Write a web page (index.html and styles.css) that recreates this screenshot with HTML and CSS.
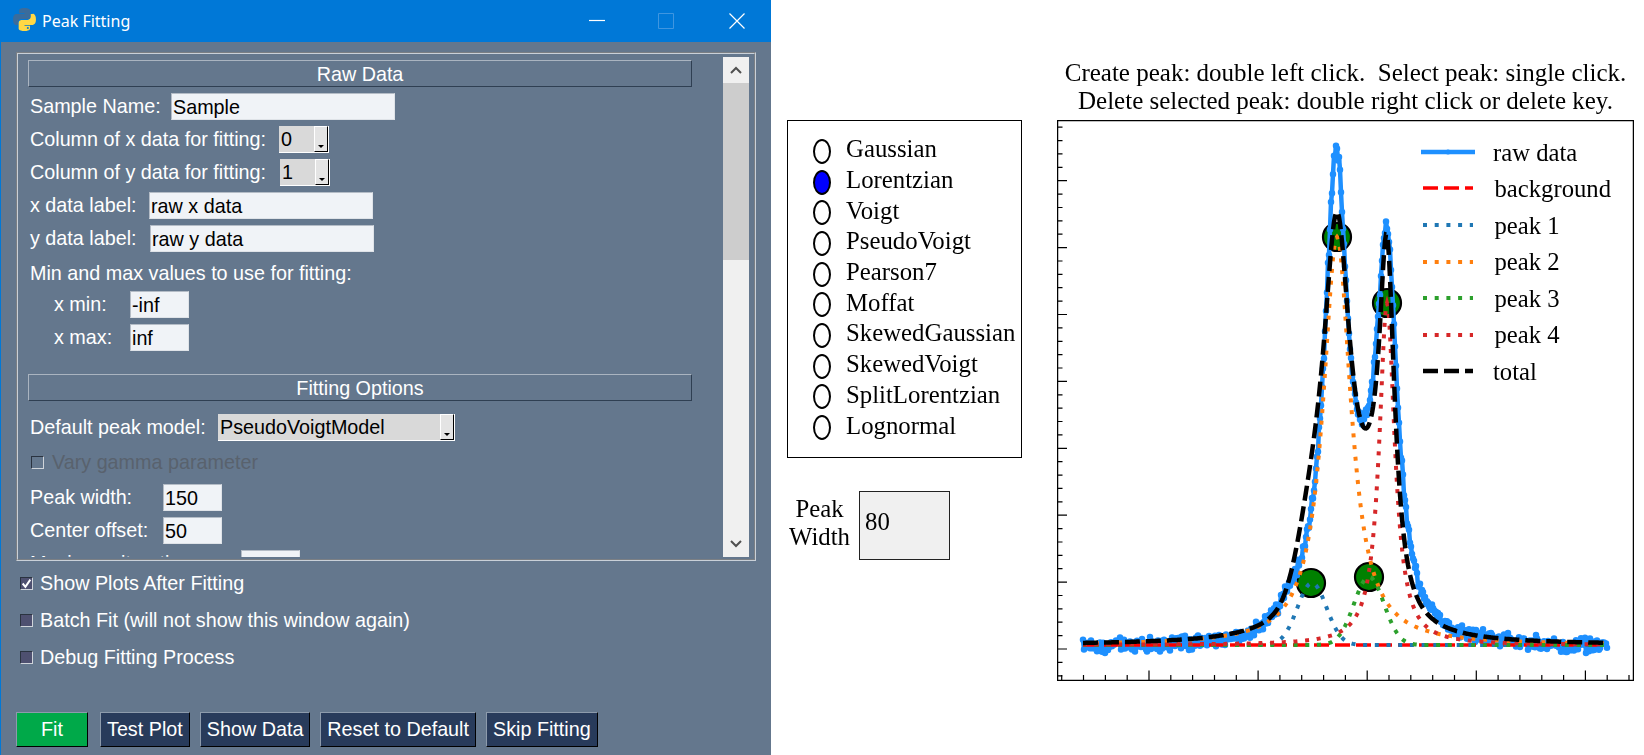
FILE: index.html
```html
<!DOCTYPE html>
<html lang="en">
<head>
<meta charset="utf-8">
<title>Peak Fitting</title>
<link rel="stylesheet" href="styles.css">
</head>
<body>
<section class="window">
  <header class="titlebar">
    <svg class="pyicon" viewBox="0 0 24 24" aria-hidden="true">
      <path class="py-blue" d="M11.9 1C6.4 1 6.7 3.4 6.7 3.4V6H12v.8H4.6S1 6.4 1 12s3.2 5.4 3.2 5.4H6v-2.6s-.1-3.2 3.2-3.2h5.4s3 .1 3-3V3.7S18.1 1 11.9 1z"/>
      <path class="py-yellow" d="M12.1 23c5.500 0 5.200-2.400 5.200-2.400V18H12v-.8h7.400s3.600.4 3.600-5.200-3.200-5.400-3.200-5.400H18v2.600s.1 3.200-3.200 3.200H9.400s-3-.1-3 3v4.900S5.900 23 12.100 23z"/>
      <circle class="py-eye" cx="15.200" cy="20.200" r="1"/>
    </svg>
    <span class="title">Peak Fitting</span>
    <span class="controls">
      <svg class="ctl" viewBox="0 0 16 16" aria-hidden="true"><path class="ctl-on" d="M0 7.500h16"/></svg>
      <svg class="ctl" viewBox="0 0 16 16" aria-hidden="true"><path class="ctl-off" d="M.5.5h15v15H.5z"/></svg>
      <svg class="ctl ctl-close" viewBox="0 0 16 16" aria-hidden="true"><path class="ctl-on" d="M.5.5l15 15M15.500.5l-15 15"/></svg>
    </span>
  </header>

  <div class="winbody">
    <div class="frame">
      <div class="scroll-area">
        <div class="section">Raw Data</div>
        <div class="row"><span class="lbl lw-141">Sample Name:</span><span class="field fw-224">Sample</span></div>
        <div class="row"><span class="lbl lw-249">Column of x data for fitting:</span><span class="combo cw-50">0<i class="drop"></i></span></div>
        <div class="row"><span class="lbl lw-250">Column of y data for fitting:</span><span class="combo cw-50">1<i class="drop"></i></span></div>
        <div class="row"><span class="lbl lw-119">x data label:</span><span class="field fw-224">raw x data</span></div>
        <div class="row"><span class="lbl lw-120">y data label:</span><span class="field fw-224">raw y data</span></div>
        <div class="row mt-8"><span class="lbl">Min and max values to use for fitting:</span></div>
        <div class="row mt-4"><span class="lbl lw-100 indent">x min:</span><span class="field fw-59">-inf</span></div>
        <div class="row"><span class="lbl lw-100 indent">x max:</span><span class="field fw-59">inf</span></div>
        <div class="section mt-23">Fitting Options</div>
        <div class="row mt-13"><span class="lbl lw-188">Default peak model:</span><span class="combo cw-237">PseudoVoigtModel<i class="drop"></i></span></div>
        <div class="row mt-8"><i class="check check-off"></i><span class="lbl-disabled">Vary gamma parameter</span></div>
        <div class="row mt-8"><span class="lbl lw-133">Peak width:</span><span class="field fw-59">150</span></div>
        <div class="row"><span class="lbl lw-133">Center offset:</span><span class="field fw-59">50</span></div>
        <div class="row"><span class="lbl lw-211">Maximum iterations:</span><span class="field fw-59">1.0</span></div>
      </div>
      <div class="scrollbar">
        <div class="sb-btn"><svg viewBox="0 0 12 8" aria-hidden="true"><path d="M1 7l5-5 5 5"/></svg></div>
        <div class="sb-thumb"></div>
        <div class="sb-track"></div>
        <div class="sb-btn"><svg viewBox="0 0 12 8" aria-hidden="true"><path d="M1 1l5 5 5-5"/></svg></div>
      </div>
    </div>

    <div class="options">
      <div class="opt"><i class="check check-on"><svg viewBox="0 0 10 10" aria-hidden="true"><path d="M1.500 5l2.500 3 4.500-6.500"/></svg></i>Show Plots After Fitting</div>
      <div class="opt"><i class="check"></i>Batch Fit (will not show this window again)</div>
      <div class="opt"><i class="check"></i>Debug Fitting Process</div>
    </div>

    <div class="buttons">
      <button class="btn btn-fit">Fit</button>
      <button class="btn">Test Plot</button>
      <button class="btn">Show Data</button>
      <button class="btn">Reset to Default</button>
      <button class="btn">Skip Fitting</button>
    </div>
  </div>
</section>

<main class="canvas">
  <div class="side">
    <div class="radios">
      <div class="radio"><i class="dot"></i>Gaussian</div>
      <div class="radio"><i class="dot dot-on"></i>Lorentzian</div>
      <div class="radio"><i class="dot"></i>Voigt</div>
      <div class="radio"><i class="dot"></i>PseudoVoigt</div>
      <div class="radio"><i class="dot"></i>Pearson7</div>
      <div class="radio"><i class="dot"></i>Moffat</div>
      <div class="radio"><i class="dot"></i>SkewedGaussian</div>
      <div class="radio"><i class="dot"></i>SkewedVoigt</div>
      <div class="radio"><i class="dot"></i>SplitLorentzian</div>
      <div class="radio"><i class="dot"></i>Lognormal</div>
    </div>
    <div class="width-row">
      <div class="width-label">Peak<br>Width</div>
      <div class="width-box">80</div>
    </div>
  </div>
  <div class="plot">
    <div class="plot-title">Create peak: double left click.  Select peak: single click.<br>Delete selected peak: double right click or delete key.</div>
    <svg id="chart" class="chart" viewBox="1057 120 577 561" aria-label="Peak fitting plot">
      <g id="ticks" class="ticks"></g>
      <g id="markers" class="markers"></g>
      <g id="curves" class="curves"></g>
      <rect class="axes" x="1057.500" y="120.500" width="576" height="560"/>
      <g class="legend">
        <path class="l-raw" d="M1421 152h54"/><circle class="l-rawdot" cx="1448" cy="152" r="2.500"/>
        <path class="l-bg" d="M1423 188h50"/>
        <path class="l-dot c1" d="M1423 225h50"/>
        <path class="l-dot c2" d="M1423 262h50"/>
        <path class="l-dot c3" d="M1423 298h50"/>
        <path class="l-dot c4" d="M1423 335h50"/>
        <path class="l-total" d="M1423 371h50"/>
        <text x="1493" y="161">raw data</text>
        <text x="1494.500" y="197">background</text>
        <text x="1494.500" y="234">peak 1</text>
        <text x="1494.500" y="270">peak 2</text>
        <text x="1494.500" y="307">peak 3</text>
        <text x="1494.500" y="343">peak 4</text>
        <text x="1493" y="380">total</text>
      </g>
    </svg>
  </div>
</main>
<script src="chart.js"></script>
</body>
</html>
```

FILE: styles.css
```css
* { box-sizing: border-box; }
html, body { margin: 0; height: 755px; overflow: hidden; }
body { display: flex; background: #fff; }

.window {
  width: 771px; height: 755px; flex: none;
  background: #64778d; color: #fff;
  border-left: 1px solid #0078d7;
  font: 19.750px/27px "Liberation Sans", Arial, sans-serif;
}
.titlebar {
  height: 42px; background: #0078d7; margin-left: -1px;
  display: flex; align-items: center; padding-left: 12px;
}
.pyicon { width: 25px; height: 25px; margin-top: -3px; }
.py-blue { fill: #3a6c9c; }
.py-yellow { fill: #ffd845; }
.py-eye { fill: #0078d7; }
.title { font: 16px/20px "Noto Sans", "Open Sans", sans-serif; margin-left: 5px; }
.controls { margin-left: auto; display: flex; margin-right: 26px; gap: 53px; }
.ctl { width: 16px; height: 16px; overflow: visible; }
.ctl-close { margin-left: 2px; }
.ctl-on { fill: none; stroke: #fff; stroke-width: 1.200; }
.ctl-off { fill: none; stroke: #3f96e0; stroke-width: 1; }

.winbody { padding: 10px 0 0 15px; }
.frame {
  width: 740px; height: 509px;
  border: 2px groove #c9d0d8;
  display: flex;
  padding: 3px 5px 2px 0;
}
.scroll-area { flex: 1; min-width: 0; overflow: hidden; padding: 3px 0 0 10px; }
.section {
  width: 664px; height: 27px; line-height: 26px; text-align: center;
  border: 1px solid; border-color: #aab4c0 #2f3f52 #2f3f52 #aab4c0;
}
.row { height: 27px; margin-top: 6px; display: flex; align-items: center; padding-left: 2px; white-space: nowrap; }
.mt-4 { margin-top: 4px; }
.mt-8 { margin-top: 8px; }
.mt-13 { margin-top: 13px; }
.mt-23 { margin-top: 23px; }
.lw-100 { width: 100px; flex: none; }
.lw-119 { width: 119px; flex: none; }
.lw-120 { width: 120px; flex: none; }
.lw-133 { width: 133px; flex: none; }
.lw-141 { width: 141px; flex: none; }
.lw-188 { width: 188px; flex: none; }
.lw-211 { width: 211px; flex: none; }
.lw-249 { width: 249px; flex: none; }
.lw-250 { width: 250px; flex: none; }
.indent { padding-left: 24px; }
.field {
  height: 27px; line-height: 26px; padding-left: 1px; color: #000; background: #f0f3f7;
  border: 1px solid; border-color: #b4bcc6 #dfe3e8 #dfe3e8 #b4bcc6;
}
.fw-224 { width: 224px; }
.fw-59 { width: 59px; }
.combo {
  position: relative; height: 27px; line-height: 26px; padding-left: 2px; color: #000; background: #d9d9d9;
  border-right: 1px solid #fff; border-bottom: 1px solid #fff;
}
.cw-50 { width: 50px; }
.cw-237 { width: 237px; }
.drop {
  position: absolute; right: 0; top: 0; width: 14px; height: 26px;
  background: #e4e4e4; border: 1px solid; border-color: #fff #000 #000 #fff;
}
.drop::after {
  content: ""; position: absolute; left: 3px; bottom: 3px;
  border-left: 3px solid transparent; border-right: 3px solid transparent; border-top: 3px solid #000;
}
.lbl-disabled { color: #59626d; margin-left: 8px; }

.check {
  display: inline-block; width: 13px; height: 13px; flex: none;
  background: #4e5070; border: 1px solid; border-color: #2a3340 #cfd4da #cfd4da #2a3340;
  position: relative;
}
.check-off { background: #64778d; margin-left: 1px; }
.check-on svg {
  position: absolute; inset: 0; width: 11px; height: 11px;
  fill: none; stroke: #fff; stroke-width: 1.800;
}

.scrollbar { width: 26px; flex: none; display: flex; flex-direction: column; }
.sb-btn { height: 26px; background: #f0f0f0; display: flex; align-items: center; justify-content: center; }
.sb-btn svg { width: 12px; height: 8px; fill: none; stroke: #505050; stroke-width: 2; }
.sb-thumb { height: 177px; background: #cdcdcd; }
.sb-track { flex: 1; background: #f0f0f0; }

.options { padding-top: 9px; }
.opt { height: 27px; margin-bottom: 10px; display: flex; align-items: center; gap: 7px; padding-left: 4px; white-space: nowrap; }
.buttons { display: flex; gap: 10px; margin-top: 41px; }
.btn {
  height: 35px; padding: 0 6px; color: #fff; background: #283b5b; cursor: default;
  font: inherit; line-height: 33px;
  border: 1px solid; border-color: #8d9bac #000 #000 #8d9bac;
}
.btn-fit { width: 72px; background: #00a949; margin-right: 2px; }

.canvas {
  flex: 1; display: flex; color: #000; padding-left: 16px; gap: 35px;
  font: 24.800px/28px "Liberation Serif", "Times New Roman", serif;
  filter: blur(0.35px);
}
.side { width: 235px; flex: none; padding-top: 120px; }
.radios { height: 338px; border: 1.500px solid #000; padding: 14px 0 0 25px; }
.radio { height: 30.700px; display: flex; align-items: center; gap: 15px; white-space: nowrap; padding-bottom: 2px; }
.dot { width: 18px; height: 25px; border: 2px solid #000; border-radius: 50%; background: #fff; flex: none; margin-bottom: -4px; }
.dot-on { background: #00f; }
.width-row { display: flex; align-items: center; margin-top: 33px; }
.width-label { width: 65px; margin-right: 7px; padding-bottom: 6px; text-align: center; }
.width-box {
  width: 91px; height: 69px; background: #f0f0f0; border: 1.500px solid #222;
  padding: 16px 0 0 5px;
}
.plot { width: 577px; flex: none; padding-top: 59px; }
.plot-title { height: 61px; text-align: center; white-space: pre; font-size: 25px; }
.chart { display: block; width: 577px; height: 561px; }

.axes { fill: none; stroke: #000; stroke-width: 1.500; }
.ticks path { stroke: #000; stroke-width: 1.200; fill: none; }
.markers circle { fill: #008000; stroke: #000; stroke-width: 2.200; }
.curves path, .legend path { fill: none; }
.raw-line { stroke: #1e90ff; stroke-width: 4.500; stroke-linejoin: round; }
.raw-dots { stroke: #1e90ff; stroke-width: 6.500; stroke-linecap: round; }
.bg-line, .l-bg { stroke: #f00; stroke-width: 3.500; stroke-dasharray: 15 6; }
.dot-line, .l-dot { stroke-width: 4; stroke-dasharray: 4 7.700; }
.c1 { stroke: #1f77b4; }
.c2 { stroke: #ff7f0e; }
.c3 { stroke: #2ca02c; }
.c4 { stroke: #d62728; }
.total-line, .l-total { stroke: #000; stroke-width: 4.500; stroke-dasharray: 15 6; }
.l-raw { stroke: #1e90ff; stroke-width: 4.500; }
.l-rawdot { fill: #1e90ff; }
.legend text { font: 24.700px "Liberation Serif", "Times New Roman", serif; fill: #000; }
```

FILE: chart.js
```js
(function () {
  var NS = "http://www.w3.org/2000/svg";
  var X0 = 1083, X1 = 1607, BASE = 645;

  function el(parent, tag, attrs) {
    var n = document.createElementNS(NS, tag);
    for (var k in attrs) n.setAttribute(k, attrs[k]);
    parent.appendChild(n);
    return n;
  }
  function lor(x, c, h, g) { var d = (x - c) / g; return h / (1 + d * d); }
  function gau(x, c, h, s) { var d = (x - c) / s; return h * Math.exp(-0.5 * d * d); }

  var p1 = function (x) { return gau(x, 1312, 62, 14.5); };
  var p2 = function (x) { return lor(x, 1337, 408, 17); };
  var p3 = function (x) { return gau(x, 1369, 68, 15); };
  var p4 = function (x) { return lor(x, 1387, 342, 9.4); };
  var total = function (x) {
    return (p1(x) + p2(x) + p3(x) + p4(x)) * 0.983 - gau(x, 1364, 8, 8);
  };
  var raw = function (x) {
    return lor(x, 1336, 470, 14) + lor(x, 1387, 370, 13) +
      gau(x, 1366, 45, 15) + gau(x, 1298, 18, 20);
  };

  function line(fn, base) {
    var d = "";
    for (var x = X0; x <= X1; x += 1) {
      d += (x === X0 ? "M" : "L") + x + " " + (base - fn(x)).toFixed(1);
    }
    return d;
  }

  /* ticks */
  var ticks = document.getElementById("ticks"), t = "", i;
  for (i = 0; i < 8; i++) t += "M1057 " + (649 - 66.9 * i).toFixed(1) + "h10";
  for (i = -2; i < 40; i++) {
    if (((i % 5) + 5) % 5 === 0) continue;
    var y = 649 - 13.38 * i;
    if (y > 122) t += "M1057 " + y.toFixed(1) + "h5.500";
  }
  for (i = 0; i < 5; i++) t += "M" + (1149 + 109.1 * i).toFixed(1) + " 680v-9.500";
  for (i = -4; i < 23; i++) {
    if (((i % 5) + 5) % 5 === 0) continue;
    t += "M" + (1149 + 21.82 * i).toFixed(1) + " 680v-5";
  }
  el(ticks, "path", { d: t });

  /* markers */
  var markers = document.getElementById("markers");
  [[1337, 237], [1387, 303], [1311, 583], [1369, 577]].forEach(function (m) {
    el(markers, "circle", { cx: m[0], cy: m[1], r: 14 });
  });

  /* noisy raw data */
  var seed = 1234;
  function rnd() { seed = (seed * 16807) % 2147483647; return seed / 2147483647; }
  var rawLine = "", rawDots = "", first = true;
  for (var x = X0; x <= X1; x += 1) {
    var n = (rnd() + rnd() - 1) * 9;
    if (rnd() < 0.05) n += (rnd() - 0.4) * 6;
    var ny = (648 - raw(x) + n).toFixed(1);
    var nx = x.toFixed(1);
    rawLine += (first ? "M" : "L") + nx + " " + ny;
    rawDots += "M" + nx + " " + ny + "h0";
    first = false;
  }

  var curves = document.getElementById("curves");
  el(curves, "path", { "class": "raw-line", d: rawLine });
  el(curves, "path", { "class": "raw-dots", d: rawDots });
  el(curves, "path", { "class": "bg-line", d: "M" + X0 + " " + BASE + "H" + X1 });
  [p1, p2, p3, p4].forEach(function (fn, idx) {
    el(curves, "path", { "class": "dot-line c" + (idx + 1), d: line(fn, BASE) });
  });
  el(curves, "path", { "class": "total-line", d: line(total, BASE) });
})();
```
